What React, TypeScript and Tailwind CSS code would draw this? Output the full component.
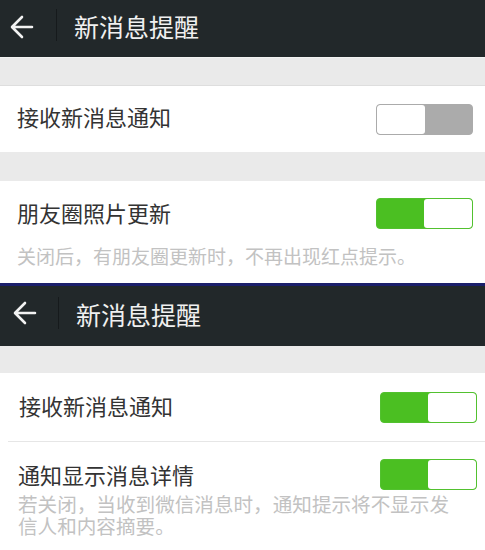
import React from 'react'

const font = { fontFamily: '"Noto Sans CJK SC", "Noto Sans", sans-serif' }

function BackArrow() {
  return (
    <svg width="24" height="24" viewBox="0 0 24 24" fill="none">
      <path
        d="M22 12H3M12 2L2 12l10 10"
        stroke="#f2f2f2"
        strokeWidth="2.6"
        strokeLinecap="round"
        strokeLinejoin="round"
      />
    </svg>
  )
}

function Toggle({ on }: { on: boolean }) {
  if (on) {
    return (
      <div className="flex h-[31px] w-[97px] overflow-hidden rounded-[4px] border-[1.5px] border-[#52c12f] bg-[#4bbf22]">
        <div className="flex-1" />
        <div className="w-[48px] rounded-[3px] bg-white" />
      </div>
    )
  }
  return (
    <div className="flex h-[31px] w-[97px] overflow-hidden rounded-[4px] border-[1.5px] border-[#ababab] bg-[#ababab]">
      <div className="w-[48px] rounded-[3px] bg-white" />
      <div className="flex-1" />
    </div>
  )
}

function Header({ h, arrowPad, dividerX }: { h: string; arrowPad: string; dividerX: string }) {
  return (
    <div className={`flex items-center bg-[#22282a] ${h}`}>
      <div className={`flex items-center ${arrowPad}`}>
        <BackArrow />
      </div>
      <div className={`h-[32px] w-px bg-[#161a1c] ${dividerX}`} />
      <div className="ml-[17px] -mt-[4px] text-[25px] leading-none text-[#f0f0f0]">新消息提醒</div>
    </div>
  )
}

export default function App() {
  return (
    <div className="h-[550px] w-[485px] overflow-hidden bg-white" style={font}>
      {/* first screenshot */}
      <Header h="h-[57px]" arrowPad="pl-[10px] -mt-[4px]" dividerX="ml-[22px] -mt-[8px]" />
      <div className="h-[29px] border-t border-[#f2f2f2] border-b border-b-[#dedede] bg-[#eaeaea]" />
      <div className="flex h-[66px] items-center justify-between pl-[17px] pr-[12px]">
        <span className="mb-[6px] text-[22px] text-[#333333]">接收新消息通知</span>
        <Toggle on={false} />
      </div>
      <div className="h-[29px] bg-[#eaeaea]" />
      <div className="pl-[17px] pr-[12px] pt-[16px] pb-[15px]">
        <div className="flex items-center justify-between">
          <span className="mb-[2px] text-[22px] leading-[31px] text-[#333333]">朋友圈照片更新</span>
          <Toggle on />
        </div>
        <div className="mt-[14px] text-[19px] leading-[24px] text-[#c2c2c2]">
          关闭后，有朋友圈更新时，不再出现红点提示。
        </div>
      </div>
      <div className="h-[3px] bg-[#1b1f6b]" />

      {/* second screenshot */}
      <Header h="h-[60px]" arrowPad="pl-[13px] -mt-[6px]" dividerX="ml-[21px] -mt-[6px]" />
      <div className="h-[27px] bg-[#eaeaea]" />
      <div className="flex h-[68px] items-center justify-between pl-[19px] pr-[8px]">
        <span className="mb-[3px] text-[22px] text-[#333333]">接收新消息通知</span>
        <Toggle on />
      </div>
      <div className="ml-[8px] h-px bg-[#e6e6e6]" />
      <div className="pl-[18px] pr-[8px] pt-[17px]">
        <div className="flex items-center justify-between">
          <span className="text-[22px] leading-[31px] text-[#333333]">通知显示消息详情</span>
          <Toggle on />
        </div>
        <div className="mt-[3px] pr-[20px] text-[19.6px] leading-[22px] text-[#c2c2c2]">
          若关闭，当收到微信消息时，通知提示将不显示发信人和内容摘要。
        </div>
      </div>
    </div>
  )
}
